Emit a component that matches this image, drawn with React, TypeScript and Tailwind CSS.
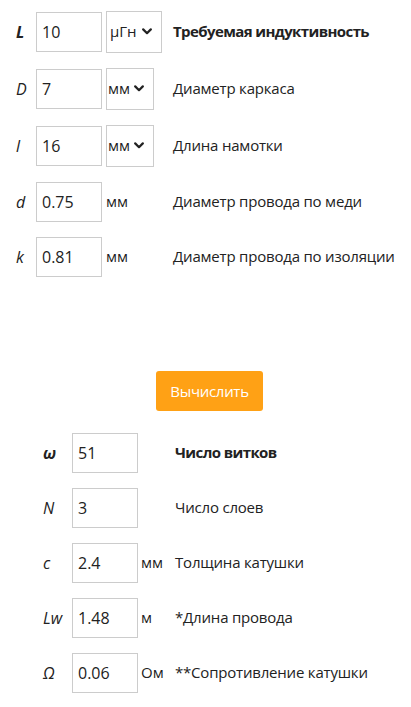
import React from "react";

const Chevron = () => (
  <svg width="10" height="7" viewBox="0 0 10 7" className="shrink-0">
    <path d="M1.2 1.4 L5 5.2 L8.8 1.4" fill="none" stroke="#222" strokeWidth="2.2" strokeLinecap="round" strokeLinejoin="round" />
  </svg>
);

const Input = ({ value }: { value: string }) => (
  <div className="w-[66px] h-[40px] border border-[#cccccc] bg-white flex items-center pl-[5px] text-[16px] text-[#222]">
    {value}
  </div>
);

const Select = ({ value, wide }: { value: string; wide?: boolean }) => (
  <div
    className={
      "h-[42px] border border-[#cccccc] bg-white flex items-center text-[15px] text-[#222] " +
      (wide ? "w-[56px] pl-[3px] gap-[5px]" : "w-[48px] pl-[1px] gap-[4px]")
    }
  >
    <span>{value}</span>
    <Chevron />
  </div>
);

type TopRow = { label: string; bold?: boolean; value: string; unit: string; select?: boolean; wide?: boolean; desc: string; h: string };

const topRows: TopRow[] = [
  { label: "L", bold: true, value: "10", unit: "μГн", select: true, wide: true, desc: "Требуемая индуктивность", h: "h-[57px]" },
  { label: "D", value: "7", unit: "мм", select: true, desc: "Диаметр каркаса", h: "h-[57px]" },
  { label: "l", value: "16", unit: "мм", select: true, desc: "Длина намотки", h: "h-[57px]" },
  { label: "d", value: "0.75", unit: "мм", desc: "Диаметр провода по меди", h: "h-[55px]" },
  { label: "k", value: "0.81", unit: "мм", desc: "Диаметр провода по изоляции", h: "h-[55px]" },
];

const bottomRows = [
  { label: "ω", bold: true, value: "51", unit: "", desc: "Число витков" },
  { label: "N", value: "3", unit: "", desc: "Число слоев" },
  { label: "c", value: "2.4", unit: "мм", desc: "Толщина катушки" },
  { label: "Lw", value: "1.48", unit: "м", desc: "*Длина провода" },
  { label: "Ω", value: "0.06", unit: "Ом", desc: "**Сопротивление катушки" },
];

export default function App() {
  return (
    <div
      className="w-[411px] h-[707px] bg-white text-[#222] text-[15px] overflow-hidden"
      style={{ fontFamily: '"Open Sans", "Noto Sans", sans-serif' }}
    >
      <div className="pt-[3px]">
        {topRows.map((r) => (
          <div key={r.label} className={"flex items-center " + r.h}>
            <div className={"w-[36px] pl-[16px] italic text-[16px] " + (r.bold ? "font-bold" : "")}>{r.label}</div>
            <Input value={r.value} />
            <div className="w-[71px] pl-[4px] flex items-center">
              {r.select ? <Select value={r.unit} wide={r.wide} /> : <span>{r.unit}</span>}
            </div>
            <div className={"whitespace-nowrap " + (r.bold ? "font-bold tracking-[-0.6px]" : "tracking-[-0.2px]")}>{r.desc}</div>
          </div>
        ))}
      </div>

      <div className="flex justify-center pl-[8px] mt-[87px]">
        <button className="w-[107px] h-[40px] rounded-[3px] bg-[#ffa115] text-white text-[15px] tracking-[-0.3px]">
          Вычислить
        </button>
      </div>

      <div className="mt-[14px]">
        {bottomRows.map((r) => (
          <div key={r.label} className="flex items-center h-[55px]">
            <div className={"w-[72px] pl-[43px] italic text-[16px] " + (r.bold ? "font-bold" : "")}>{r.label}</div>
            <Input value={r.value} />
            <div className="w-[37px] pl-[3px]">{r.unit}</div>
            <div className={"whitespace-nowrap " + (r.bold ? "font-bold tracking-[-0.6px]" : "tracking-[-0.2px]")}>{r.desc}</div>
          </div>
        ))}
      </div>
    </div>
  );
}
